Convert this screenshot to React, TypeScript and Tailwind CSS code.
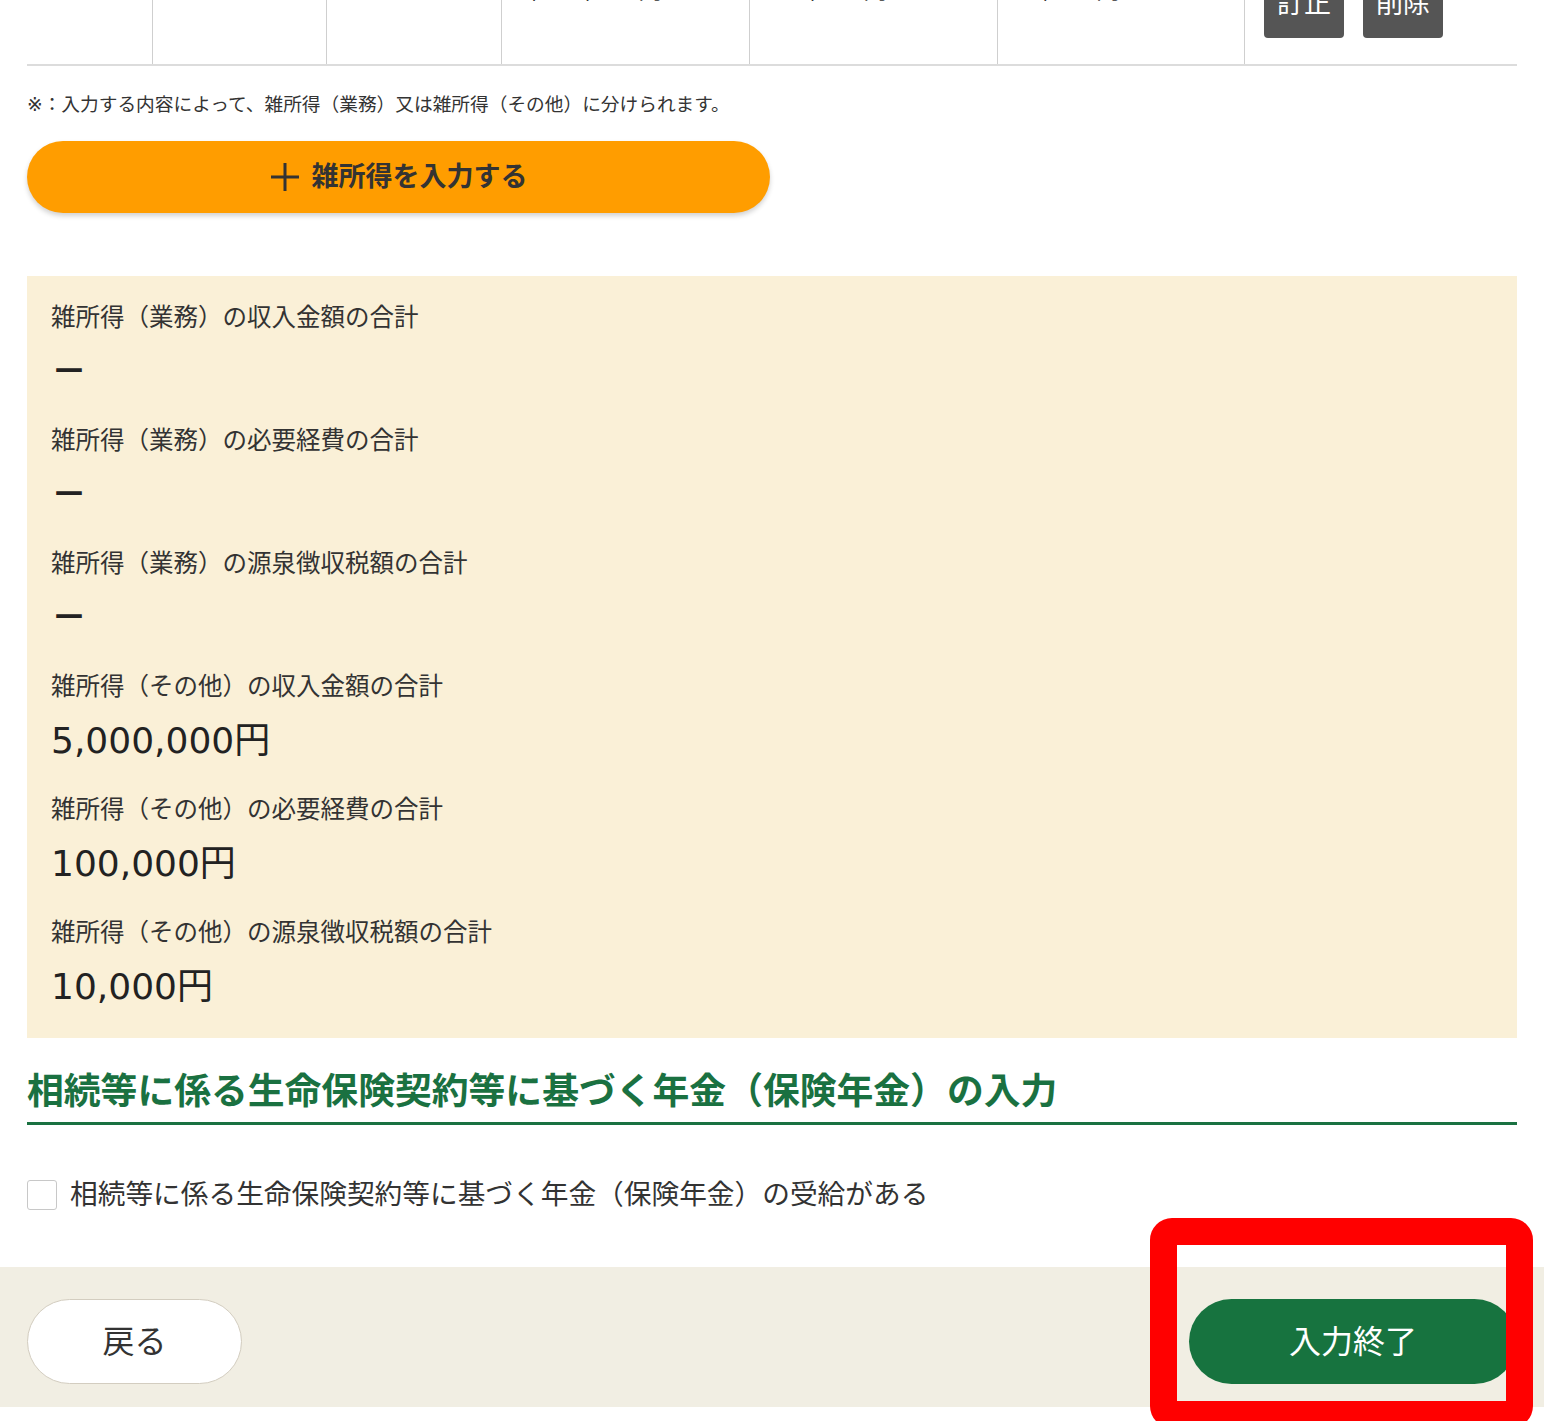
import React from "react";

const font = { fontFamily: '"DejaVu Sans", "Noto Sans CJK JP", sans-serif' };

const totals = [
  { label: "雑所得（業務）の収入金額の合計", value: "－" },
  { label: "雑所得（業務）の必要経費の合計", value: "－" },
  { label: "雑所得（業務）の源泉徴収税額の合計", value: "－" },
  { label: "雑所得（その他）の収入金額の合計", value: "5,000,000円" },
  { label: "雑所得（その他）の必要経費の合計", value: "100,000円" },
  { label: "雑所得（その他）の源泉徴収税額の合計", value: "10,000円" },
];

const cells = ["", "", "", "5,000,000円", "100,000円", "10,000円"];

const PlusIcon = () => (
  <svg width="30" height="30" viewBox="0 0 30 30" className="shrink-0">
    <path d="M15 1v28M1 15h28" stroke="#333" strokeWidth="3" fill="none" />
  </svg>
);

export default function App() {
  return (
    <div className="relative w-[1544px] bg-white text-[#333]" style={font}>
      <div className="px-[27px]">
        {/* table row, top cut off */}
        <div className="h-[66px] overflow-hidden">
          <div className="-mt-[46px] grid h-[112px] grid-cols-[125px_174px_175px_248px_248px_247px_1fr] border-b-2 border-[#dcdcdc]">
            {cells.map((c, i) => (
              <div
                key={i}
                className={`pt-[21px] pl-[14px] text-[24px] leading-[30px] ${i > 0 ? "border-l border-[#cfcfcf]" : ""}`}
              >
                {c}
              </div>
            ))}
            <div className="flex gap-[19px] border-l border-[#cfcfcf] pt-[16px] pl-[19px]">
              <button className="h-[68px] w-[80px] rounded-[4px] bg-[#555] text-[27px] text-white">訂正</button>
              <button className="h-[68px] w-[80px] rounded-[4px] bg-[#555] text-[27px] text-white">削除</button>
            </div>
          </div>
        </div>

        <p className="mt-[26px] text-[18.7px] leading-[26px] text-[#333]">
          ※：入力する内容によって、雑所得（業務）又は雑所得（その他）に分けられます。
        </p>

        <button className="mt-[23px] flex h-[72px] w-[743px] items-center justify-center gap-[12px] rounded-full bg-[#ff9d00] text-[27px] font-bold text-[#333] shadow-[0_3px_5px_rgba(0,0,0,0.18)]">
          <PlusIcon />
          <span>雑所得を入力する</span>
        </button>

        <div className="mt-[63px] flex flex-col gap-[25px] bg-[#faf0d7] px-[24px] pt-[24px] pb-[25px]">
          {totals.map((t) => (
            <div key={t.label}>
              <div className="text-[24.5px] leading-[36px] text-[#333]">{t.label}</div>
              <div
                className={`mt-[10px] text-[36px] leading-[52px] text-[#222] ${t.value === "－" ? "font-bold" : ""}`}
              >
                {t.value}
              </div>
            </div>
          ))}
        </div>

        <h2 className="mt-[30px] border-b-[3px] border-[#1a7141] pb-[6px] text-[36.8px] leading-[48px] font-bold text-[#1a7141]">
          相続等に係る生命保険契約等に基づく年金（保険年金）の入力
        </h2>

        <label className="mt-[55px] flex items-center gap-[13px]">
          <span className="h-[30px] w-[30px] rounded-[3px] border border-[#c8c8c8] bg-white" />
          <span className="text-[27.7px] leading-[30px] text-[#333]">
            相続等に係る生命保険契約等に基づく年金（保険年金）の受給がある
          </span>
        </label>
      </div>

      <div className="mt-[57px] flex items-center justify-between bg-[#f1eee3] px-[27px] pt-[32px] pb-[23px]">
        <button className="h-[85px] w-[215px] rounded-full border border-[#d3cdc0] bg-white text-[32px] text-[#333]">
          戻る
        </button>
        <button className="h-[85px] w-[328px] rounded-full bg-[#17733f] text-[32px] text-white">入力終了</button>
      </div>
      <div className="h-[14px]" />

      {/* red highlight annotation */}
      <div className="pointer-events-none absolute left-[1150px] top-[1218px] h-[210px] w-[383px] rounded-[22px] border-[27px] border-[#ff0000]" />
    </div>
  );
}
